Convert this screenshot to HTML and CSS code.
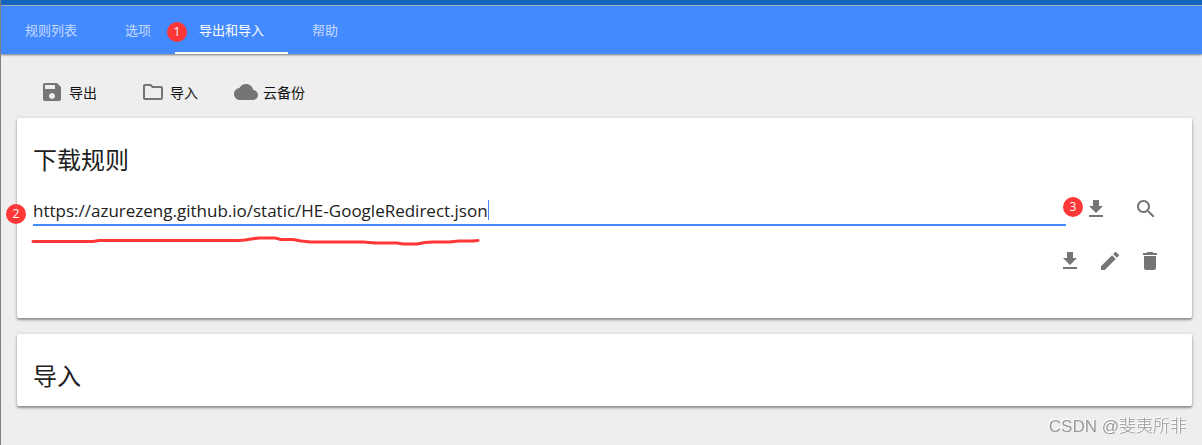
FILE: index.html
```html
<!DOCTYPE html>
<html lang="zh-CN">
<head>
    <meta charset="UTF-8">
    <meta name="viewport" content="width=device-width, initial-scale=1.0">
    <title>导出和导入</title>
    <link rel="stylesheet" href="styles.css">
</head>
<body>

    <header class="app-bar">
        <nav class="tabs">
            <a class="tab" href="#rules">规则列表</a>
            <a class="tab" href="#options">选项</a>
            <a class="tab active" href="#export"><span class="badge badge-tab">1</span>导出和导入</a>
            <a class="tab" href="#help">帮助</a>
        </nav>
    </header>

    <main>
        <div class="toolbar">
            <button class="tool" type="button">
                <svg class="icon" viewBox="0 0 24 24"><path d="M17 3H5c-1.11 0-2 .9-2 2v14c0 1.1.89 2 2 2h14c1.1 0 2-.9 2-2V7l-4-4zm-5 16c-1.66 0-3-1.34-3-3s1.34-3 3-3 3 1.34 3 3-1.34 3-3 3zm3-10H5V5h10v4z"/></svg>
                导出
            </button>
            <button class="tool" type="button">
                <svg class="icon" viewBox="0 0 24 24"><path d="M9.17 6l2 2H20v10H4V6h5.17M10 4H4c-1.1 0-1.99.9-1.99 2L2 18c0 1.1.9 2 2 2h16c1.1 0 2-.9 2-2V8c0-1.1-.9-2-2-2h-8l-2-2z"/></svg>
                导入
            </button>
            <button class="tool" type="button">
                <svg class="icon" viewBox="0 0 24 24"><path d="M19.35 10.04C18.67 6.59 15.64 4 12 4 9.11 4 6.6 5.64 5.35 8.04 2.34 8.36 0 10.91 0 14c0 3.31 2.69 6 6 6h13c2.76 0 5-2.24 5-5 0-2.64-2.05-4.78-4.65-4.96z"/></svg>
                云备份
            </button>
        </div>

        <section class="card download">
            <h2>下载规则</h2>
            <div class="url-row">
                <div class="field">
                    <span class="badge badge-field">2</span>
                    <input type="text" aria-label="下载规则" value="https://azurezeng.github.io/static/HE-GoogleRedirect.json">
                    <span class="caret"></span>
                    <svg class="marker" viewBox="0 0 450 12"><path d="M2 6.500H62L68 5.500H208L214 5L220 4L228 3H244L250 4.500H262L270 6L280 7H332L344 8H366L372 9H386L394 7.500L402 7H418L428 6H442L447 5.500"/></svg>
                </div>
                <div class="actions">
                    <button class="icon-button" type="button" aria-label="下载">
                        <svg class="icon" viewBox="0 0 24 24"><path d="M19 9h-4V3H9v6H5l7 7 7-7zM5 18v2h14v-2H5z"/></svg>
                        <span class="badge badge-action">3</span>
                    </button>
                    <button class="icon-button" type="button" aria-label="搜索">
                        <svg class="icon" viewBox="0 0 24 24"><path d="M15.500 14h-.79l-.28-.27C15.410 12.590 16 11.110 16 9.500 16 5.910 13.090 3 9.500 3S3 5.910 3 9.500 5.910 16 9.500 16c1.610 0 3.090-.59 4.230-1.570l.27.28v.79l5 4.990L20.490 19l-4.990-5zm-6 0C7.010 14 5 11.990 5 9.500S7.010 5 9.500 5 14 7.010 14 9.500 11.990 14 9.500 14z"/></svg>
                    </button>
                </div>
            </div>
            <div class="file-row">
                <button class="icon-button" type="button" aria-label="下载文件">
                    <svg class="icon" viewBox="0 0 24 24"><path d="M19 9h-4V3H9v6H5l7 7 7-7zM5 18v2h14v-2H5z"/></svg>
                </button>
                <button class="icon-button" type="button" aria-label="编辑">
                    <svg class="icon" viewBox="0 0 24 24"><path d="M3 17.250V21h3.750L17.810 9.940l-3.750-3.750L3 17.250zM20.710 7.040c.39-.39.39-1.020 0-1.410l-2.340-2.340c-.39-.39-1.020-.39-1.410 0l-1.830 1.830 3.750 3.750 1.830-1.830z"/></svg>
                </button>
                <button class="icon-button" type="button" aria-label="删除">
                    <svg class="icon" viewBox="0 0 24 24"><path d="M6 19c0 1.100.9 2 2 2h8c1.100 0 2-.9 2-2V7H6v12zM19 4h-3.500l-1-1h-5l-1 1H5v2h14V4z"/></svg>
                </button>
            </div>
        </section>

        <section class="card">
            <h2>导入</h2>
        </section>
    </main>

    <div class="watermark">CSDN @斐夷所非</div>

</body>
</html>
```

FILE: styles.css
```css
* {
    box-sizing: border-box;
}
body {
    margin: 0;
    min-height: 100vh;
    border-left: 1px solid #808080;
    background-color: #eee;
    color: #212121;
    font-family: "Open Sans", "Noto Sans CJK SC", sans-serif;
}
button {
    padding: 0;
    border: none;
    background: none;
    color: #111;
    font-family: inherit;
    cursor: pointer;
}
.app-bar {
    border-top: 5px solid #1565c0;
    background-color: #448aff;
    box-shadow: 0 1px 2px rgba(0, 0, 0, 0.5);
}
.tabs {
    display: flex;
    height: 49px;
    border-top: 1px solid #a0aec4;
}
.tab {
    position: relative;
    padding: 0 24px;
    border-bottom: 2px solid transparent;
    color: rgba(255, 255, 255, 0.7);
    font-size: 13px;
    line-height: 48px;
    text-decoration: none;
}
.tab.active {
    border-bottom-color: #fff;
    color: #fff;
}
.badge {
    position: absolute;
    width: 20px;
    height: 20px;
    border-radius: 50%;
    background-color: #ff3737;
    color: #fff;
    font-size: 12px;
    line-height: 20px;
    text-align: center;
}
.badge-tab {
    top: 16px;
    left: -8px;
}
.badge-field {
    top: 8px;
    left: -27px;
}
.badge-action {
    top: 8px;
    left: -13px;
}
main {
    padding: 16px 10px 16px 16px;
}
.toolbar {
    display: flex;
    gap: 36px;
    padding: 6px 23px 10px;
}
.tool {
    display: flex;
    align-items: center;
    gap: 5px;
    height: 32px;
    font-size: 14px;
}
.tool:first-child {
    margin-right: 8px;
}
.icon {
    display: block;
    width: 24px;
    height: 24px;
    fill: #757575;
}
.card {
    margin-bottom: 16px;
    padding: 24px 16px 12px;
    border-radius: 2px;
    background-color: #fff;
    box-shadow: 0 1px 4px rgba(0, 0, 0, 0.2), 0 2px 2px rgba(0, 0, 0, 0.3);
}
.download {
    min-height: 200px;
}
h2 {
    margin: 0;
    font-size: 24px;
    font-weight: 400;
    line-height: 36px;
}
.url-row {
    display: flex;
    margin-top: 18px;
}
.field {
    position: relative;
    flex: 1;
}
.field input {
    display: block;
    width: 100%;
    height: 30px;
    padding: 0;
    border: none;
    border-bottom: 2px solid #448aff;
    outline: none;
    background: none;
    color: #212121;
    font-family: inherit;
    font-size: 17px;
}
.caret {
    position: absolute;
    top: 4px;
    left: 455px;
    width: 1px;
    height: 20px;
    background-color: #448aff;
}
.marker {
    position: absolute;
    top: 39px;
    left: -2px;
    width: 450px;
    height: 12px;
    fill: none;
    stroke: #ff3737;
    stroke-width: 3;
    stroke-linecap: round;
    stroke-linejoin: round;
}
.actions {
    display: flex;
    gap: 10px;
    width: 110px;
    margin-top: -7px;
    padding-left: 10px;
}
.icon-button {
    position: relative;
    display: flex;
    align-items: center;
    justify-content: center;
    width: 40px;
    height: 40px;
}
.file-row {
    display: flex;
    justify-content: flex-end;
    margin-top: 12px;
    padding-right: 6px;
}
.watermark {
    position: fixed;
    right: 15px;
    bottom: 6px;
    color: #999;
    font-family: "Liberation Sans", "Noto Sans CJK SC", sans-serif;
    font-size: 17px;
    font-weight: 300;
    line-height: 24px;
    text-shadow: -1px -1px 0 #fff;
}
```
